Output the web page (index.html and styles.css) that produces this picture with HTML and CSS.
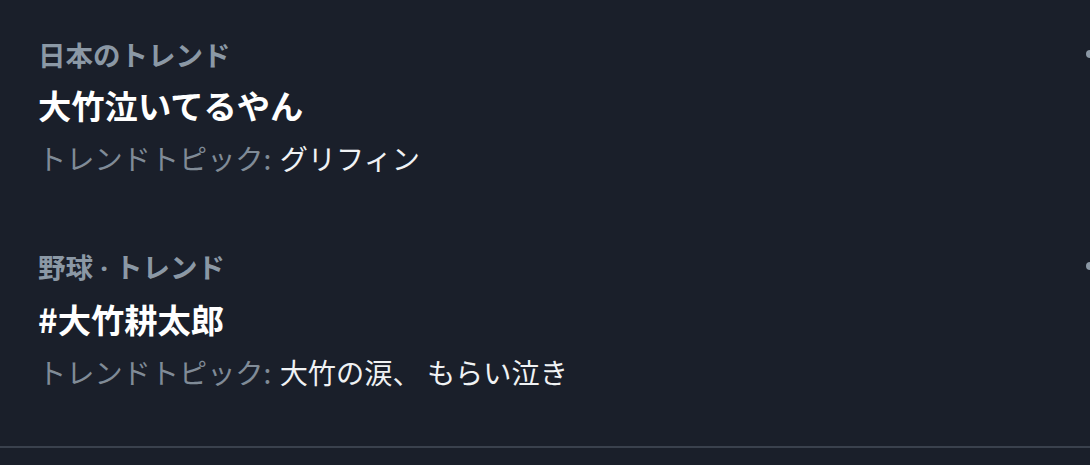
FILE: index.html
```html
<!DOCTYPE html>
<html lang="ja">
<head>
  <meta charset="UTF-8">
  <meta name="viewport" content="width=device-width, initial-scale=1.0">
  <title>トレンド</title>
  <link rel="stylesheet" href="styles.css">
</head>
<body>
  <div class="trends">
    <div class="trend">
      <div class="trend-body">
        <div class="trend-meta">日本のトレンド</div>
        <div class="trend-name">大竹泣いてるやん</div>
        <div class="trend-topic">トレンドトピック: <span class="topic-value">グリフィン</span></div>
      </div>
      <div class="more"><span></span><span></span><span></span></div>
    </div>

    <div class="trend">
      <div class="trend-body">
        <div class="trend-meta">野球<span class="sep"> · </span>トレンド</div>
        <div class="trend-name">#大竹耕太郎</div>
        <div class="trend-topic">トレンドトピック: <span class="topic-value">大竹の涙、 もらい泣き</span></div>
      </div>
      <div class="more"><span></span><span></span><span></span></div>
    </div>
  </div>
  <div class="divider"></div>
</body>
</html>
```

FILE: styles.css
```css
body {
  margin: 0;
  padding: 0;
  background: #1a1f2a;
  color: #f5f6f7;
  font-family: "Noto Sans CJK JP", "Noto Sans", sans-serif;
  overflow: hidden;
  height: 465px;
}
.trends {
  display: flex;
  flex-direction: column;
}
.trend {
  display: flex;
  justify-content: space-between;
  align-items: flex-start;
  padding: 29px 0 27px 38px;
}
.trend-body {
  display: flex;
  flex-direction: column;
}
.trend-meta {
  font-size: 27.5px;
  line-height: 50px;
  font-weight: bold;
  color: #8b98a5;
}
.trend-meta .sep {
  font-family: "Noto Sans", sans-serif;
  font-weight: bold;
}
.trend-name {
  font-size: 33.3px;
  line-height: 52px;
  font-weight: bold;
  color: #ffffff;
}
.trend-topic {
  font-size: 28.2px;
  line-height: 54px;
  color: #808b97;
}
.topic-value {
  margin-left: 2px;
  color: #f0f2f4;
}
.more {
  display: flex;
  gap: 5px;
  width: 34px;
  height: 50px;
  align-items: center;
  margin-right: -30px;
  flex: none;
}
.more span {
  width: 8px;
  height: 8px;
  border-radius: 50%;
  background: #8b98a5;
  flex: none;
}
.divider {
  margin-top: 20px;
  height: 2px;
  background: #3a414d;
}
```
